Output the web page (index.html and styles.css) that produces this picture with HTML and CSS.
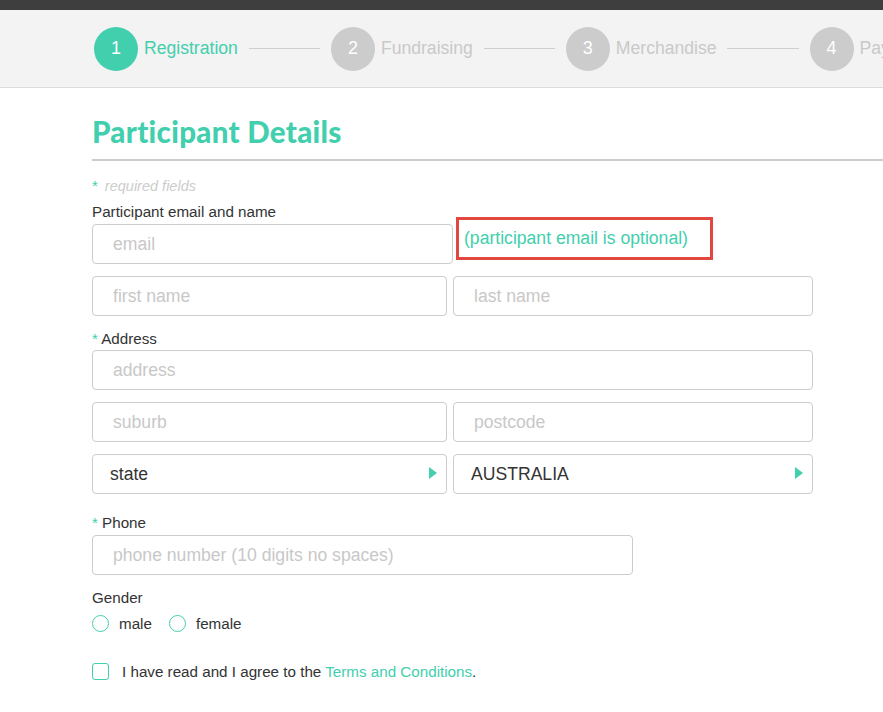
FILE: index.html
```html
<!DOCTYPE html>
<html>
<head>
<meta charset="utf-8">
<link rel="stylesheet" href="styles.css">
</head>
<body>
<div class="topbar"></div>
<div class="stepper">
  <div class="step active"><span class="num">1</span><span class="name">Registration</span></div>
  <span class="line"></span>
  <div class="step"><span class="num">2</span><span class="name">Fundraising</span></div>
  <span class="line"></span>
  <div class="step"><span class="num">3</span><span class="name">Merchandise</span></div>
  <span class="line"></span>
  <div class="step"><span class="num">4</span><span class="name">Payment</span></div>
</div>
<main class="main">
  <h1 class="title">Participant Details</h1>
  <form class="form">
    <p class="req"><span class="star">*</span> required fields</p>
    <div class="label lbl-email">Participant email and name</div>
    <div class="row-email">
      <div class="input"><span class="ph">email</span></div>
      <div class="note">(participant email is optional)</div>
    </div>
    <div class="row2 gap-top">
      <div class="input"><span class="ph">first name</span></div>
      <div class="input"><span class="ph">last name</span></div>
    </div>
    <div class="label lbl-address"><span class="star">*</span> Address</div>
    <div class="input"><span class="ph">address</span></div>
    <div class="row2 gap-top">
      <div class="input"><span class="ph">suburb</span></div>
      <div class="input"><span class="ph">postcode</span></div>
    </div>
    <div class="row2 gap-top">
      <div class="input select"><span class="val">state</span><span class="arrow"></span></div>
      <div class="input select"><span class="val">AUSTRALIA</span><span class="arrow"></span></div>
    </div>
    <div class="label lbl-phone"><span class="star">*</span> Phone</div>
    <div class="input phone"><span class="ph">phone number (10 digits no spaces)</span></div>
    <div class="label lbl-gender">Gender</div>
    <div class="radios">
      <label class="radio"><span class="circle"></span>male</label>
      <label class="radio"><span class="circle"></span>female</label>
    </div>
    <div class="agree"><span class="box"></span><span>I have read and I agree to the <a class="link">Terms and Conditions</a>.</span></div>
  </form>
</main>
</body>
</html>
```

FILE: styles.css
```css
* { box-sizing: border-box; }
html, body { margin: 0; padding: 0; background: #fff; overflow: hidden; }
body { font-family: "Liberation Sans", Arial, sans-serif; color: #333; width: 883px; height: 712px; }

.topbar { height: 10px; background: #3e3e3e; }

.stepper {
  height: 78px;
  background: #f3f3f3;
  border-bottom: 1px solid #dcdcdc;
  display: flex;
  align-items: center;
  padding-left: 94px;
  white-space: nowrap;
  overflow: hidden;
}
.step { display: flex; align-items: center; flex: none; }
.step .num {
  width: 44px; height: 44px; border-radius: 50%;
  background: #cccccc; color: #fff;
  display: flex; align-items: center; justify-content: center;
  font-size: 18px;
}
.step .name { margin-left: 6px; font-size: 17.6px; color: #c9c9c9; }
.step.active .num { background: #42cfae; }
.step.active .name { color: #42cfae; }
.line { flex: none; width: 71.5px; height: 1px; background: #cfcfcf; margin: 0 10.75px; }

.main { padding-left: 92px; }
.title {
  margin: 26px 0 0 0;
  font-family: "Lato", sans-serif;
  font-weight: 900;
  font-size: 29.5px;
  line-height: 35px;
  color: #42cfae;
  padding-bottom: 10px;
  border-bottom: 2px solid #cccccc;
  letter-spacing: 0.3px;
}

.form { width: 721px; }
.req { margin: 16px 0 0 0; font-size: 14.5px; line-height: 18px; font-style: italic; color: #cccccc; }
.star { color: #42cfae; font-style: normal; font-size: 15px; }
.req .star { margin-right: 3px; }

.label { font-size: 15.2px; line-height: 18px; color: #333; }
.lbl-email { margin-top: 8px; margin-bottom: 3px; }
.lbl-address { margin-top: 14px; margin-bottom: 2px; }
.lbl-phone { margin-top: 20px; margin-bottom: 3px; }
.lbl-gender { margin-top: 14px; }

.input {
  height: 40px;
  border: 1px solid #cccccc;
  border-radius: 4px;
  display: flex;
  align-items: center;
  padding-left: 20px;
  font-size: 17.6px;
  background: #fff;
}
.ph { color: #c8c8c8; }

.row-email { display: grid; grid-template-columns: 361px 257px; column-gap: 3px; align-items: start; }
.note {
  margin-top: -7px;
  height: 43px;
  border: 3px solid #e2473f;
  color: #42cfae;
  font-size: 17.6px;
  display: flex; align-items: center;
  padding-left: 5px;
  white-space: nowrap;
}

.row2 { display: grid; grid-template-columns: 355px 360px; column-gap: 6px; }
.gap-top { margin-top: 12px; }

.select { padding-left: 17px; justify-content: space-between; padding-right: 9px; }
.select .val { color: #333; }
.arrow {
  width: 0; height: 0;
  border-top: 6px solid transparent;
  border-bottom: 6px solid transparent;
  border-left: 8px solid #42cfae;
  margin-top: -3px;
}

.phone { width: 541px; }

.radios { display: flex; margin-top: 7px; height: 18px; align-items: center; font-size: 15.2px; }
.radio { display: flex; align-items: center; margin-right: 17px; }
.circle { width: 17px; height: 17px; border: 1px solid #42cfae; border-radius: 50%; margin-right: 10px; }

.agree { display: flex; align-items: center; margin-top: 30px; font-size: 15.2px; height: 18px; }
.box { width: 17px; height: 17px; border: 1.5px solid #42cfae; border-radius: 3px; margin-right: 13px; flex: none; }
.link { color: #42cfae; text-decoration: none; }
```
